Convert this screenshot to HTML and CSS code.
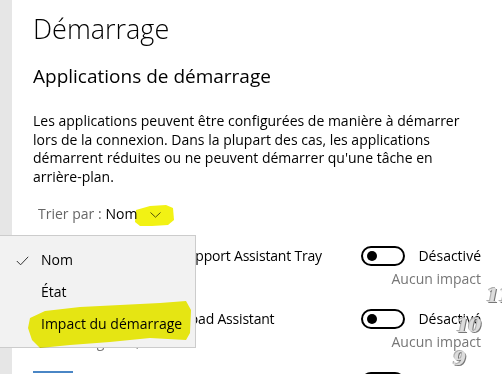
FILE: index.html
```html
<!DOCTYPE html>
<html lang="fr">

<head>
    <meta charset="UTF-8">
    <meta name="viewport" content="width=device-width, initial-scale=1.0">
    <title>Démarrage</title>
    <link rel="stylesheet" href="styles.css">
</head>

<body>
    <div class="page">
        <div class="rail"></div>
        <div class="main">
            <h1 class="title">Démarrage</h1>
            <h2 class="subtitle">Applications de démarrage</h2>
            <p class="intro">Les applications peuvent être configurées de manière à démarrer lors de la connexion. Dans la plupart des cas, les applications démarrent réduites ou ne peuvent démarrer qu'une tâche en arrière-plan.</p>
            <div class="sort">
                <span class="sort-label">Trier par :</span>
                <span class="sort-value">Nom</span>
                <svg class="chevron" width="11" height="6" viewBox="0 0 11 6">
                    <path d="M0.5 0.5 L5.5 5.2 L10.5 0.5" fill="none" stroke="#555" stroke-width="1" />
                </svg>
            </div>
            <ul class="apps">
                <li class="app">
                    <div class="app-icon"></div>
                    <div class="app-info">
                        <div class="app-name">Intel® Driver &amp; Support Assistant Tray</div>
                        <div class="app-publisher">Intel Corporation</div>
                    </div>
                    <div class="app-state">
                        <div class="switch-row"><span class="switch"></span><span>Désactivé</span></div>
                        <div class="impact">Aucun impact</div>
                    </div>
                </li>
                <li class="app">
                    <div class="app-icon"></div>
                    <div class="app-info">
                        <div class="app-name">Logitech® Download Assistant</div>
                        <div class="app-publisher">Logitech, Inc.</div>
                    </div>
                    <div class="app-state">
                        <div class="switch-row"><span class="switch"></span><span>Désactivé</span></div>
                        <div class="impact">Aucun impact</div>
                    </div>
                </li>
                <li class="app">
                    <div class="app-icon"></div>
                    <div class="app-info">
                        <div class="app-name">Microsoft OneDrive</div>
                        <div class="app-publisher">Microsoft Corporation</div>
                    </div>
                    <div class="app-state">
                        <div class="switch-row"><span class="switch"></span><span>Désactivé</span></div>
                        <div class="impact">Aucun impact</div>
                    </div>
                </li>
            </ul>
        </div>

        <!-- menu de tri ouvert -->
        <ul class="sort-menu">
            <li class="sort-item">
                <svg class="check" width="13" height="10" viewBox="0 0 13 10">
                    <path d="M0.8 5 L4.6 8.8 L12.2 0.8" fill="none" stroke="#333" stroke-width="1" />
                </svg>
                Nom
            </li>
            <li class="sort-item">État</li>
            <li class="sort-item">Impact du démarrage</li>
        </ul>

        <!-- surlignage jaune -->
        <svg class="marker" width="502" height="374" viewBox="0 0 502 374">
            <path d="M136 210 L150 206 L166 205 L173 208 L174 220 L168 225 L152 226 L140 226 L135 222 Z" />
            <path d="M30 318 L45 311 L80 307 L120 305 L160 303 L186 301 L191 310 L190 333 L186 340 L150 338 L110 342 L70 345 L40 348 L32 340 L28 328 Z" />
        </svg>

        <span class="digit digit-11">11</span>
        <span class="digit digit-10">10</span>
        <span class="digit digit-9">9</span>
    </div>
</body>

</html>
```

FILE: styles.css
```css
* {
    box-sizing: border-box;
}

body,
html {
    margin: 0;
    background-color: #fff;
}

body {
    font-family: "Open Sans", "Noto Sans", sans-serif;
    color: #000;
}

.page {
    position: relative;
    display: flex;
    width: 502px;
    height: 374px;
    overflow: hidden;
}

.rail {
    width: 12px;
    flex: none;
    background-color: #e6e6e6;
}

.main {
    flex: 1;
    padding: 11px 21px 0 21px;
}

.title {
    margin: 0;
    font-size: 27px;
    font-weight: 300;
    line-height: 36px;
}

.subtitle {
    margin: 15px 0 0;
    font-size: 19px;
    font-weight: 400;
    line-height: 28px;
}

.intro {
    margin: 22px 0 0;
    font-size: 14px;
    line-height: 18.5px;
}

.sort {
    display: flex;
    align-items: center;
    gap: 4px;
    margin-top: 18px;
    padding-left: 5px;
    font-size: 14px;
    line-height: 20px;
}

.sort-label {
    color: #666;
}

.chevron {
    margin-left: 8px;
    margin-top: 1px;
}

.apps {
    list-style: none;
    margin: 21px 0 0;
    padding: 0;
}

.app {
    display: flex;
    align-items: flex-start;
    height: 63px;
}

.app-icon {
    width: 40px;
    height: 40px;
    flex: none;
    border-top: 2px solid #4a86c5;
    border-bottom: 2px solid #4a86c5;
    background-color: #fff;
}

.app-info {
    flex: 1;
    padding-left: 8px;
    white-space: nowrap;
    overflow: hidden;
}

.app-name {
    margin-top: 1px;
    font-size: 14px;
    letter-spacing: -0.2px;
    line-height: 20px;
}

.app-publisher {
    margin-top: 3px;
    font-size: 14px;
    line-height: 20px;
    color: #767676;
}

.app-state {
    display: flex;
    flex-direction: column;
    align-items: flex-end;
    font-size: 14px;
    line-height: 20px;
}

.switch-row {
    display: flex;
    align-items: center;
    gap: 13px;
    margin-top: 1px;
}

.switch {
    position: relative;
    width: 44px;
    height: 20px;
    border: 2px solid #000;
    border-radius: 10px;
}

.switch::after {
    content: "";
    position: absolute;
    left: 4px;
    top: 3px;
    width: 10px;
    height: 10px;
    border-radius: 50%;
    background-color: #000;
}

.impact {
    margin-top: 3px;
    color: #767676;
}

/* menu déroulant au-dessus de la liste */
.sort-menu {
    position: absolute;
    left: -1px;
    top: 235px;
    width: 197px;
    height: 113px;
    margin: 0;
    padding: 8px 0 0;
    list-style: none;
    background-color: #f2f2f2;
    border: 1px solid #cccccc;
    font-size: 14px;
}

.sort-item {
    position: relative;
    height: 32px;
    line-height: 32px;
    padding-left: 41px;
}

.check {
    position: absolute;
    left: 16px;
    top: 12px;
}

.marker {
    position: absolute;
    left: 0;
    top: 0;
    pointer-events: none;
    mix-blend-mode: multiply;
}

.marker path {
    fill: #f2f214;
}

.digit {
    position: absolute;
    font-family: "DejaVu Serif", serif;
    font-style: italic;
    font-weight: bold;
    font-size: 19px;
    line-height: 1;
    letter-spacing: -1px;
    color: #dcdcdc;
    text-shadow: 1px 1px 0 #777, -1px -1px 0 #b0b0b0;
}

.digit-11 {
    left: 486px;
    top: 286px;
}

.digit-10 {
    left: 456px;
    top: 316px;
}

.digit-9 {
    left: 453px;
    top: 349px;
}
```
